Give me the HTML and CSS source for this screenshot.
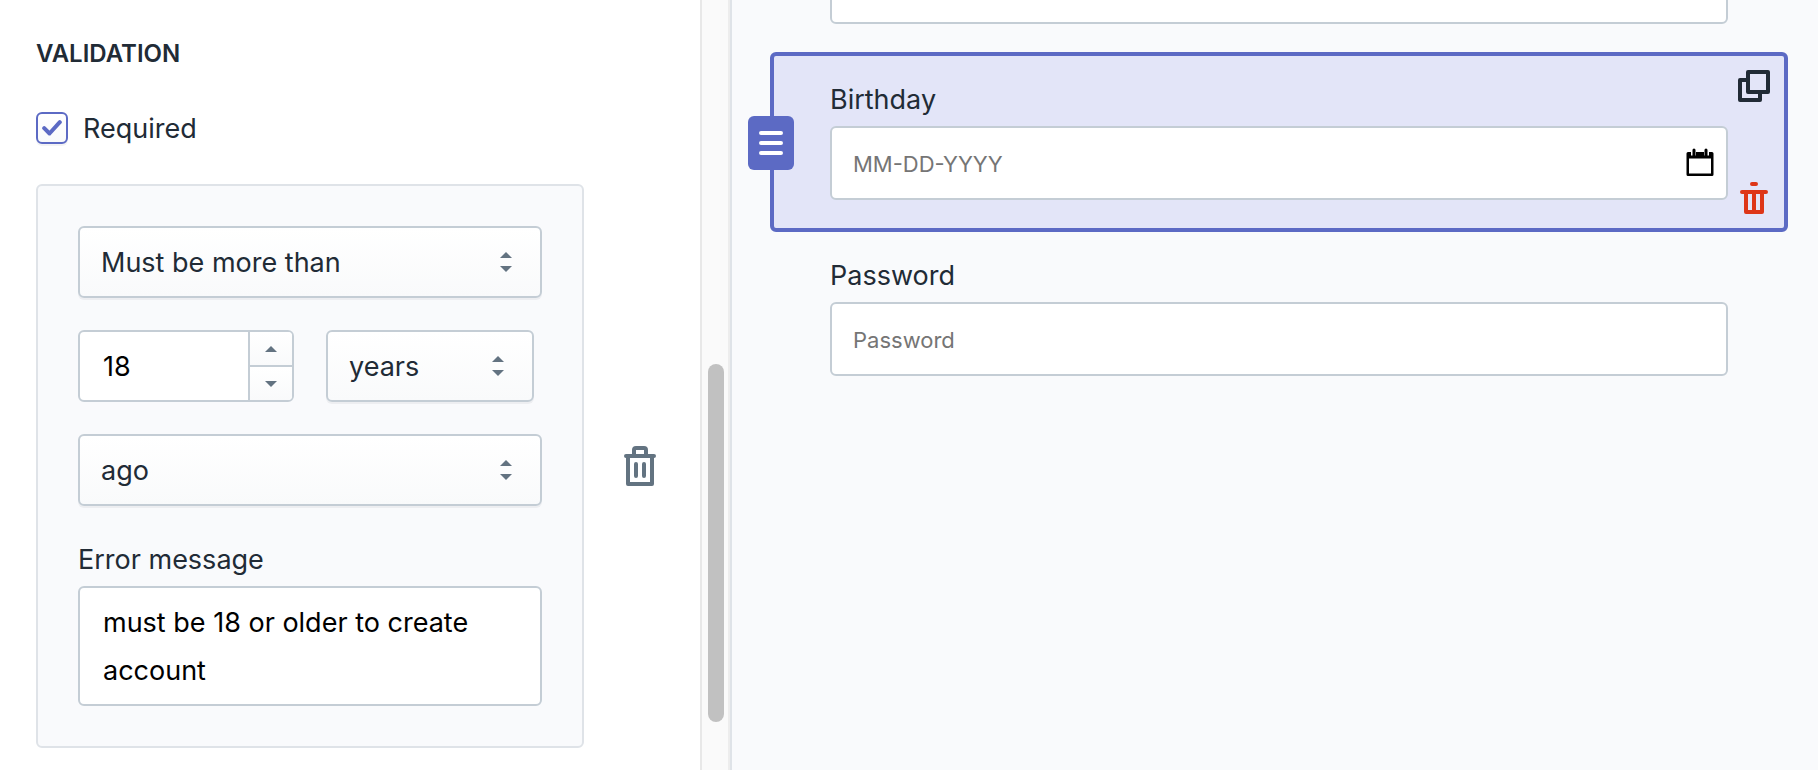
FILE: index.html
```html
<!DOCTYPE html>
<html lang="en">
<head>
    <meta charset="UTF-8">
    <meta name="viewport" content="width=device-width, initial-scale=1.0">
    <title>Form builder</title>
    <link rel="stylesheet" href="styles.css">
</head>
<body>
    <div class="builder">
        <aside class="sidebar">
            <div class="settings">
                <h2>VALIDATION</h2>

                <div class="check-row">
                    <span class="checkbox">
                        <input type="checkbox" id="required" checked>
                        <svg width="20" height="16" viewBox="0 0 20 16" fill="none" stroke="#5c6ac4" stroke-width="4" stroke-linecap="round" stroke-linejoin="round">
                            <path d="M2.2 8.2l5.3 5.3L17.8 2.2"></path>
                        </svg>
                    </span>
                    <label for="required">Required</label>
                </div>

                <div class="rule-row">
                    <div class="rule">
                        <div class="select">
                            <select aria-label="Condition">
                                <option>Must be more than</option>
                                <option>Must be less than</option>
                            </select>
                            <svg width="12" height="20" viewBox="0 0 12 20" fill="#637381">
                                <path d="M6 0l6 6H0z"></path>
                                <path d="M0 14h12l-6 6z"></path>
                            </svg>
                        </div>

                        <div class="amount-row">
                            <div class="number">
                                <input type="number" aria-label="Amount" value="18">
                                <div class="spinner">
                                    <button type="button" aria-label="Increase">
                                        <svg width="12" height="6" viewBox="0 0 12 6" fill="#637381"><path d="M6 0l6 6H0z"></path></svg>
                                    </button>
                                    <button type="button" aria-label="Decrease">
                                        <svg width="12" height="6" viewBox="0 0 12 6" fill="#637381"><path d="M0 0h12L6 6z"></path></svg>
                                    </button>
                                </div>
                            </div>
                            <div class="select">
                                <select aria-label="Unit">
                                    <option>years</option>
                                    <option>days</option>
                                </select>
                                <svg width="12" height="20" viewBox="0 0 12 20" fill="#637381">
                                    <path d="M6 0l6 6H0z"></path>
                                    <path d="M0 14h12l-6 6z"></path>
                                </svg>
                            </div>
                        </div>

                        <div class="select">
                            <select aria-label="Direction">
                                <option>ago</option>
                                <option>from now</option>
                            </select>
                            <svg width="12" height="20" viewBox="0 0 12 20" fill="#637381">
                                <path d="M6 0l6 6H0z"></path>
                                <path d="M0 14h12l-6 6z"></path>
                            </svg>
                        </div>

                        <div class="field">
                            <label for="errorMessage">Error message</label>
                            <textarea id="errorMessage" rows="2">must be 18 or older to create account</textarea>
                        </div>
                    </div>

                    <button type="button" class="icon-button" aria-label="Delete rule">
                        <svg width="32" height="40" viewBox="0 0 32 40" fill="none" stroke="#637381" stroke-width="4" stroke-linecap="round" stroke-linejoin="round">
                            <path d="M2 10h28M10 9V4a2 2 0 0 1 2-2h8a2 2 0 0 1 2 2v5"></path>
                            <path d="M4 10v28h24V10"></path>
                            <path d="M12 18v12M20 18v12"></path>
                        </svg>
                    </button>
                </div>
            </div>

            <div class="scroll-track"><div class="scroll-thumb"></div></div>
        </aside>

        <main class="preview">
            <div class="item">
                <div class="field">
                    <input type="text" aria-label="Text field">
                </div>
            </div>

            <div class="item selected">
                <button type="button" class="handle" aria-label="Move field">
                    <svg width="24" height="24" viewBox="0 0 24 24" stroke="#fff" stroke-width="4" stroke-linecap="round">
                        <path d="M2 2h20M2 12h20M2 22h20"></path>
                    </svg>
                </button>
                <div class="field">
                    <label for="birthday">Birthday</label>
                    <div class="date">
                        <input type="text" id="birthday" placeholder="MM-DD-YYYY">
                        <svg width="28" height="28" viewBox="0 0 28 28">
                            <path fill="#000" fill-rule="evenodd" d="M2 4h3v3.500h5V4h8v3.500h5V4h3a1.500 1.500 0 0 1 1.500 1.500v21A1.500 1.500 0 0 1 26 28H2a1.500 1.500 0 0 1-1.500-1.500v-21A1.500 1.500 0 0 1 2 4zM3 10.500v15h22v-15z"></path>
                            <path stroke="#000" stroke-width="3" stroke-linecap="round" d="M8 2v6M20 2v6"></path>
                        </svg>
                    </div>
                </div>
                <div class="actions">
                    <button type="button" class="icon-button" aria-label="Duplicate field">
                        <svg width="32" height="32" viewBox="0 0 32 32" fill="none" stroke="#212b36" stroke-width="4" stroke-linejoin="round">
                            <path d="M10 2h20v20H10z"></path>
                            <path d="M9 10H2v20h20v-7"></path>
                        </svg>
                    </button>
                    <button type="button" class="icon-button" aria-label="Delete field">
                        <svg width="28" height="32" viewBox="0 0 28 32" fill="none" stroke="#de3618" stroke-width="4" stroke-linecap="round" stroke-linejoin="round">
                            <path d="M12 2h4M2 10h24"></path>
                            <path d="M6 10v20h16V10M14 10v19"></path>
                        </svg>
                    </button>
                </div>
            </div>

            <div class="item">
                <div class="field">
                    <label for="password">Password</label>
                    <input type="password" id="password" placeholder="Password">
                </div>
            </div>
        </main>
    </div>
</body>
</html>
```
FILE: styles.css
```css
/* General Styles */
* {
    box-sizing: border-box;
}

body {
    margin: 0;
    font-family: Inter, "Liberation Sans", sans-serif;
    font-size: 27px;
    line-height: 40px;
    color: #212b36;
    background-color: #ffffff;
}

input,
select,
textarea,
button {
    margin: 0;
    font: inherit;
    color: inherit;
}

button {
    display: flex;
    align-items: center;
    justify-content: center;
    padding: 0;
    border: none;
    background: transparent;
    cursor: pointer;
}

svg {
    display: block;
}

label {
    display: block;
    padding-top: 2px;
    line-height: 40px;
}

.builder {
    display: grid;
    grid-template-columns: 122fr 181fr;
    height: 100vh;
    overflow: hidden;
}

/* Sidebar */
.sidebar {
    display: flex;
    min-width: 0;
    min-height: 0;
}

.settings {
    flex: 1;
    display: flex;
    flex-direction: column;
    gap: 35px;
    min-width: 0;
    padding: 36px 44px 0 36px;
    overflow: hidden;
}

h2 {
    margin: 0;
    font-size: 24px;
    font-weight: 600;
    line-height: 36px;
}

.check-row {
    display: flex;
    align-items: center;
    gap: 15px;
}

.checkbox {
    position: relative;
}

.checkbox input {
    display: block;
    width: 32px;
    height: 32px;
    appearance: none;
    border: 2px solid #5c6ac4;
    border-radius: 6px;
    background: linear-gradient(#ffffff, #f9fafb);
    box-shadow: 0 2px 0 rgba(22, 29, 37, 0.05);
}

.checkbox svg {
    position: absolute;
    top: 8px;
    left: 6px;
    pointer-events: none;
}

.checkbox input:not(:checked) + svg {
    display: none;
}

/* Validation rule */
.rule-row {
    display: flex;
    align-items: center;
    gap: 40px;
}

.rule {
    flex: 1;
    display: flex;
    flex-direction: column;
    gap: 32px;
    min-width: 0;
    padding: 40px;
    border: 2px solid #dfe3e8;
    border-radius: 6px;
    background-color: #f9fafc;
}

.select {
    position: relative;
}

.select select {
    display: block;
    width: 100%;
    height: 72px;
    padding: 2px 60px 0 21px;
    appearance: none;
    border: 2px solid #c4cdd5;
    border-radius: 6px;
    background: linear-gradient(#ffffff, #f9fafb);
    box-shadow: 0 2px 0 rgba(22, 29, 37, 0.05);
}

.select svg {
    position: absolute;
    top: 26px;
    right: 30px;
    pointer-events: none;
}

.amount-row {
    display: grid;
    grid-template-columns: 27fr 26fr;
    gap: 32px;
    padding-right: 8px;
}

.number {
    display: flex;
    height: 72px;
    border: 2px solid #c4cdd5;
    border-radius: 6px;
    background-color: #ffffff;
    overflow: hidden;
}

.number input {
    flex: 1;
    min-width: 0;
    padding: 2px 23px 0;
    border: none;
    background: transparent;
    color: #000000;
    appearance: textfield;
}

.number input::-webkit-inner-spin-button {
    display: none;
}

.spinner {
    display: flex;
    flex-direction: column;
    width: 44px;
    border-left: 2px solid #c4cdd5;
}

.spinner button {
    flex: 1;
    background: linear-gradient(#ffffff, #f9fafb);
}

.spinner button:first-child {
    border-bottom: 2px solid #c4cdd5;
}

/* Fields */
.field {
    display: flex;
    flex-direction: column;
    gap: 6px;
}

.field input,
.field textarea {
    display: block;
    width: 100%;
    border: 2px solid #c4cdd5;
    border-radius: 6px;
    background-color: #ffffff;
    color: #000000;
}

.field textarea {
    height: 120px;
    padding: 11px 23px 9px;
    line-height: 48px;
    resize: none;
    overflow: hidden;
}

.field input {
    height: 74px;
    padding: 2px 21px 0;
    font-size: 22px;
}

.field input::placeholder {
    color: #757575;
}

/* Scrollbar */
.scroll-track {
    position: relative;
    width: 32px;
    border-left: 2px solid #e8e8e8;
    border-right: 2px solid #dfe3e8;
    background-color: #fafafa;
    box-shadow: inset -2px 0 0 #ededed;
}

.scroll-thumb {
    position: absolute;
    top: 364px;
    left: 6px;
    width: 16px;
    height: 358px;
    border-radius: 8px;
    background-color: #c1c1c1;
}

/* Form preview, scrolled part of the way down the first field */
.preview {
    min-width: 0;
    padding: 0 30px 0 38px;
    background-color: #f9fafc;
    overflow: hidden;
}

.item {
    position: relative;
    margin-bottom: -4px;
    padding: 22px 56px 28px;
    border: 4px solid transparent;
    border-radius: 6px;
}

.item:first-child {
    margin-top: -76px;
}

.item.selected {
    border-color: #5c6ac4;
    background-color: #e3e5f8;
}

.handle {
    position: absolute;
    top: 60px;
    left: -26px;
    width: 46px;
    height: 54px;
    border-radius: 6px;
    background-color: #5c6ac4;
}

.date {
    position: relative;
}

.date svg {
    position: absolute;
    top: 22px;
    right: 14px;
}

.actions {
    position: absolute;
    top: 14px;
    right: 14px;
    bottom: 14px;
    display: flex;
    flex-direction: column;
    align-items: center;
    justify-content: space-between;
}
```
